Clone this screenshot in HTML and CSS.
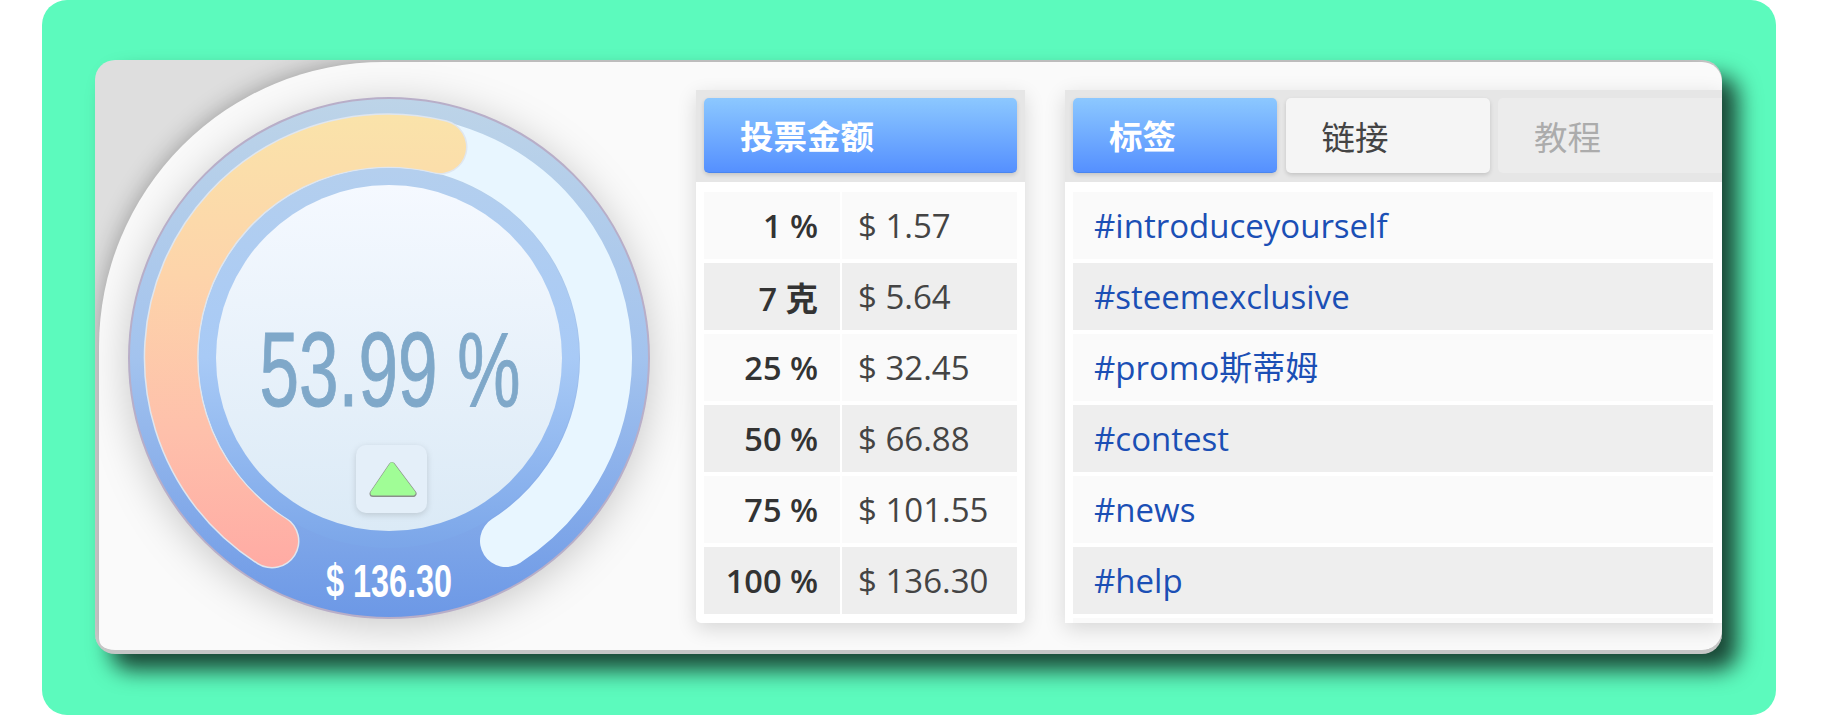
FILE: index.html
```html
<!DOCTYPE html>
<html lang="en">
<head>
    <meta charset="UTF-8">
    <meta name="viewport" content="width=device-width, initial-scale=1.0">
    <title>Voting power</title>
    <link rel="stylesheet" href="styles.css">
</head>
<body>
    <div id="stage">
        <div id="card">
            <div id="inner">
                <div id="gaugeCol">
                    <svg id="gauge" width="540" height="540" viewBox="0 0 540 540">
                        <defs>
                            <linearGradient id="outerGrad" x1="0" y1="0" x2="0" y2="1">
                                <stop offset="0" stop-color="#bdd4e8"/>
                                <stop offset="0.5" stop-color="#a3c3ee"/>
                                <stop offset="1" stop-color="#6c98e6"/>
                            </linearGradient>
                            <linearGradient id="ringGrad" x1="0" y1="0" x2="0" y2="1">
                                <stop offset="0" stop-color="#b4cfee"/>
                                <stop offset="0.5" stop-color="#a8caf6"/>
                                <stop offset="1" stop-color="#7ba6e9"/>
                            </linearGradient>
                            <linearGradient id="discGrad" x1="0" y1="0" x2="0" y2="1">
                                <stop offset="0" stop-color="#f5f9ff"/>
                                <stop offset="1" stop-color="#dbeaf6"/>
                            </linearGradient>
                            <linearGradient id="powerGrad" gradientUnits="userSpaceOnUse" x1="0" y1="28" x2="0" y2="480">
                                <stop offset="0" stop-color="#fae3aa"/>
                                <stop offset="0.35" stop-color="#fdd4aa"/>
                                <stop offset="0.7" stop-color="#fec0ab"/>
                                <stop offset="1" stop-color="#ffaba4"/>
                            </linearGradient>
                        </defs>
                        <circle class="outer" cx="270" cy="270" r="260" fill="url(#outerGrad)"/>
                        <path class="track" d="M153 453 A217 217 0 1 1 387 453"/>
                        <path class="power-edge" d="M153 453 A217 217 0 0 1 321 59"/>
                        <path class="power" d="M153 453 A217 217 0 0 1 321 59" stroke="url(#powerGrad)"/>
                        <circle cx="270" cy="270" r="190" fill="url(#ringGrad)"/>
                        <circle cx="270" cy="270" r="173" fill="url(#discGrad)"/>
                        <text class="percent" x="271" y="318" text-anchor="middle" textLength="261" lengthAdjust="spacingAndGlyphs">53.99 %</text>
                        <rect class="up-btn" x="237" y="357" width="71" height="68" rx="10"/>
                        <path class="up-arrow-rim" d="M273 377 L294 405 L254 405 Z"/>
                        <path class="up-arrow" d="M273 377 L294 405 L254 405 Z"/>
                        <text class="total" x="270" y="509" text-anchor="middle" textLength="126" lengthAdjust="spacingAndGlyphs">$ 136.30</text>
                    </svg>
                </div>

                <div class="panel" id="votePanel">
                    <div class="panel-head">
                        <div class="tab active vote-tab">投票金额</div>
                    </div>
                    <table class="vote-table">
                        <tr><td class="weight">1 %</td><td>$ 1.57</td></tr>
                        <tr><td class="weight">7 克</td><td>$ 5.64</td></tr>
                        <tr><td class="weight">25 %</td><td>$ 32.45</td></tr>
                        <tr><td class="weight">50 %</td><td>$ 66.88</td></tr>
                        <tr><td class="weight">75 %</td><td>$ 101.55</td></tr>
                        <tr><td class="weight">100 %</td><td>$ 136.30</td></tr>
                    </table>
                </div>

                <div class="panel" id="tagPanel">
                    <div class="panel-head">
                        <div class="tab active">标签</div>
                        <div class="tab">链接</div>
                        <div class="tab muted">教程</div>
                    </div>
                    <div class="tag-list">
                        <div class="tag-row">#introduceyourself</div>
                        <div class="tag-row">#steemexclusive</div>
                        <div class="tag-row">#promo斯蒂姆</div>
                        <div class="tag-row">#contest</div>
                        <div class="tag-row">#news</div>
                        <div class="tag-row">#help</div>
                        <div class="tag-end"></div>
                    </div>
                </div>
            </div>
        </div>
    </div>
</body>
</html>
```
FILE: styles.css
```css
html, body {
    margin: 0;
    padding: 0;
    background-color: #ffffff;
    font-family: "Open Sans", "Noto Sans CJK SC", sans-serif;
}
body {
    padding: 0 55px 4px 42px;
}
#stage {
    background-color: #5cfabd;
    border-radius: 25px;
    padding: 60px 54px 61px 53px;
}
#card {
    background-color: #dedede;
    border-radius: 20px;
    border-bottom: 4px solid #c6c6c6;
    padding: 2px 0 0 4px;
    box-shadow: 16px 16px 22px rgba(0, 0, 0, 0.72);
    overflow: hidden;
}
#inner {
    display: flex;
    height: 588px;
    padding-top: 28px;
    box-sizing: border-box;
    background-color: #fafafa;
    border-radius: 285px 20px 20px 12px;
    box-shadow: 0 0 24px rgba(0, 0, 0, 0.32);
    overflow: hidden;
}
#gaugeCol {
    width: 597px;
    flex-shrink: 0;
    padding: 0 0 0 20px;
    box-sizing: border-box;
}
#gauge {
    display: block;
    margin-top: -2px;
    overflow: visible;
}
.outer {
    stroke: #b8aec8;
    stroke-width: 2;
    filter: drop-shadow(0 6px 20px rgba(0, 0, 0, 0.2));
}
.track, .power, .power-edge {
    fill: none;
    stroke-linecap: round;
}
.track {
    stroke: #e8f6ff;
    stroke-width: 52;
}
.power {
    stroke-width: 52;
}
.power-edge {
    stroke: #dfe6ef;
    stroke-width: 55;
}
.percent {
    font-family: "Liberation Sans", sans-serif;
    font-size: 106px;
    fill: #7fa8c9;
    stroke: #7fa8c9;
    stroke-width: 1;
}
.total {
    font-family: "Liberation Sans", sans-serif;
    font-size: 46px;
    font-weight: bold;
    fill: #ffffff;
}
.up-btn {
    fill: #e4eff9;
    filter: drop-shadow(0 2px 3px rgba(0, 0, 0, 0.14));
}
.up-arrow, .up-arrow-rim {
    stroke-linejoin: round;
}
.up-arrow-rim {
    fill: #8a8f8a;
    stroke: #8a8f8a;
    stroke-width: 7;
    transform: translateY(0.6px);
}
.up-arrow {
    fill: #a0fd96;
    stroke: #a0fd96;
    stroke-width: 5;
}
.panel {
    background-color: #ffffff;
    border-radius: 0 0 5px 5px;
    box-shadow: 0 6px 20px rgba(0, 0, 0, 0.14);
    height: 533px;
}
#votePanel {
    width: 329px;
    flex-shrink: 0;
    margin-right: 40px;
}
#tagPanel {
    flex: 1;
    min-width: 0;
    overflow: hidden;
    border-radius: 0;
}
.panel-head {
    display: flex;
    gap: 8.500px;
    height: 92px;
    padding: 8px;
    box-sizing: border-box;
    background-color: #e6e6e6;
    overflow: hidden;
}
.tab {
    flex: 0 0 204px;
    height: 75px;
    box-sizing: border-box;
    padding-left: 36px;
    border-radius: 5px;
    background-color: #f5f5f5;
    box-shadow: 0 2px 4px rgba(0, 0, 0, 0.15);
    font-family: "Noto Sans CJK SC", sans-serif;
    font-size: 33.500px;
    line-height: 75px;
    color: #444444;
}
.tab.active {
    background: linear-gradient(#8cc8ff, #5590ff);
    border-bottom: 1px solid #4a86f0;
    color: #ffffff;
    font-weight: bold;
    line-height: 74px;
}
.tab.vote-tab {
    flex: 0 0 313px;
}
.tab.muted {
    flex: 0 0 232px;
    background-color: #ececec;
    box-shadow: none;
    color: #acacac;
}
.vote-table {
    border-collapse: separate;
    border-spacing: 2px 4px;
    margin: 6px 6px 0;
    width: 317px;
    font-size: 33px;
    color: #444444;
    table-layout: fixed;
}
.vote-table td {
    height: 67px;
    padding: 0 0 0 16px;
    background-color: #fafafa;
    white-space: nowrap;
}
.vote-table .weight {
    width: 114px;
    padding: 0 22px 0 0;
    text-align: right;
    font-size: 32.500px;
    font-weight: 600;
    color: #333333;
}
.vote-table tr:nth-child(even) td {
    background-color: #eeeeee;
}
.tag-list {
    display: flex;
    flex-direction: column;
    gap: 4px;
    padding: 10px 9px 0 8px;
}
.tag-row {
    height: 67px;
    padding-left: 21px;
    background-color: #fafafa;
    font-size: 33px;
    line-height: 67px;
    color: #1b4fb5;
    white-space: nowrap;
}
.tag-row:nth-child(even) {
    background-color: #eeeeee;
}
.tag-end {
    height: 6px;
    background-color: #fafafa;
}
```
